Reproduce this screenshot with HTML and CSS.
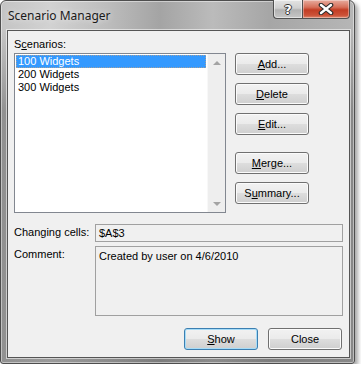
FILE: index.html
```html
<!DOCTYPE html>
<html lang="en">
<head>
    <meta charset="UTF-8">
    <title>Scenario Manager</title>
    <link rel="stylesheet" href="styles.css">
</head>
<body>
    <div class="window">
        <div class="titlebar">
            <span class="title">Scenario Manager</span>
            <div class="caption-buttons">
                <span class="cap-btn help">?</span>
                <span class="cap-btn close">
                    <svg width="16" height="12" viewBox="0 0 16 12">
                        <path d="M3 2 L13 10 M13 2 L3 10" stroke="#2c2c2c" stroke-width="4.6" stroke-linecap="round"/>
                        <path d="M3 2 L13 10 M13 2 L3 10" stroke="#ffffff" stroke-width="2.4" stroke-linecap="round"/>
                    </svg>
                </span>
            </div>
        </div>
        <div class="client">
            <div class="top">
                <div class="scenarios">
                    <div class="label">S<u>c</u>enarios:</div>
                    <div class="listbox">
                        <ul class="items">
                            <li class="selected">100 Widgets</li>
                            <li>200 Widgets</li>
                            <li>300 Widgets</li>
                        </ul>
                        <div class="scrollbar">
                            <span class="arrow up"></span>
                            <span class="arrow down"></span>
                        </div>
                    </div>
                </div>
                <div class="side-buttons">
                    <button class="btn"><u>A</u>dd...</button>
                    <button class="btn"><u>D</u>elete</button>
                    <button class="btn"><u>E</u>dit...</button>
                    <button class="btn spaced"><u>M</u>erge...</button>
                    <button class="btn">S<u>u</u>mmary...</button>
                </div>
            </div>
            <div class="field-row">
                <div class="field-label">Changing cells:</div>
                <div class="field cells">$A$3</div>
            </div>
            <div class="field-row comment-row">
                <div class="field-label">Comment:</div>
                <div class="field comment">Created by user on 4/6/2010</div>
            </div>
            <div class="footer">
                <button class="btn default"><u>S</u>how</button>
                <button class="btn">Close</button>
            </div>
        </div>
    </div>
</body>
</html>
```

FILE: styles.css
```css
body {
    margin: 0;
    background: #ffffff;
    font-family: "Liberation Sans", Arial, sans-serif;
    font-size: 11px;
    color: #000;
}
.window {
    width: 355px;
    height: 364px;
    box-sizing: border-box;
    border: 1px solid #4e4e4e;
    border-radius: 6px 6px 3px 3px;
    padding: 0 4px 5px 6px;
    background:
        linear-gradient(to bottom, rgba(0,0,0,0) 0, rgba(0,0,0,0) 30px, rgba(50,50,50,0.35) 110px, rgba(50,50,50,0.35) 100%),
        linear-gradient(to right, #c4c4c4 0%, #d2d2d2 14%, #bdbdbd 30%, #a4a4a4 45%, #bbbbbb 60%, #a6a6a6 76%, #b6b6b6 100%);
    box-shadow: inset 0 0 0 1px rgba(255,255,255,0.45), 3px 3px 4px rgba(0,0,0,0.35);
}
.titlebar {
    height: 29px;
    display: flex;
    justify-content: space-between;
}
.title {
    font-family: "Noto Sans", "Open Sans", sans-serif;
    font-size: 12px;
    color: #1a1a1a;
    padding-left: 1px;
    line-height: 29px;
    text-shadow: 0 0 6px rgba(255,255,255,0.8);
}
.caption-buttons {
    display: flex;
    height: 19px;
    margin-top: -1px;
}
.cap-btn {
    display: flex;
    align-items: center;
    justify-content: center;
    box-sizing: border-box;
    height: 19px;
    border: 1px solid #505050;
    border-top: none;
}
.help {
    width: 29px;
    border-right: none;
    border-radius: 0 0 0 4px;
    background: linear-gradient(to bottom, #e4e4e4 0%, #d0d0d0 45%, #b2b2b2 55%, #c6c6c6 100%);
    box-shadow: inset 0 0 0 1px rgba(255,255,255,0.5);
    color: #ffffff;
    font-family: "DejaVu Sans", sans-serif;
    font-weight: bold;
    font-size: 13px;
    text-shadow: 1px 0 0 #333, -1px 0 0 #333, 0 1px 0 #333, 0 -1px 0 #333;
}
.close {
    width: 48px;
    border-radius: 0 0 4px 0;
    background: linear-gradient(to bottom, #e7ad9f 0%, #d6705a 40%, #c23d24 55%, #cc5238 85%, #dd8a70 100%);
    box-shadow: inset 0 0 0 1px rgba(255,255,255,0.35);
}
.client {
    box-sizing: border-box;
    height: 328px;
    border: 1px solid #555555;
    background: #f0f0f0;
    padding: 7px 6px 7px 6px;
    box-shadow: 0 0 0 1px rgba(255,255,255,0.55);
}
.top {
    display: flex;
    gap: 9px;
}
.scenarios {
    width: 212px;
}
.label {
    line-height: 13px;
    margin-bottom: 2px;
}
.listbox {
    display: flex;
    height: 160px;
    box-sizing: border-box;
    border: 1px solid #828790;
    background: #ffffff;
}
.items {
    list-style: none;
    margin: 0;
    padding: 1px 1px 0 1px;
    flex: 1;
}
.items li {
    line-height: 13px;
    padding-left: 2px;
}
.items li.selected {
    background: #3399ff;
    color: #ffffff;
    outline: 1px dotted #a0a0a0;
    outline-offset: -1px;
}
.scrollbar {
    width: 17px;
    background: #eeeeee;
    border-left: 1px solid #f8f8f8;
    display: flex;
    flex-direction: column;
    justify-content: space-between;
    align-items: center;
    padding: 7px 0 6px;
}
.arrow {
    width: 0;
    height: 0;
    border-left: 4px solid transparent;
    border-right: 4px solid transparent;
}
.arrow.up {
    border-bottom: 4px solid #a3a3a3;
}
.arrow.down {
    border-top: 4px solid #a3a3a3;
}
.side-buttons {
    display: flex;
    flex-direction: column;
    gap: 8px;
    margin-top: 15px;
}
.btn {
    width: 74px;
    height: 22px;
    padding: 0;
    font-family: "Liberation Sans", Arial, sans-serif;
    font-size: 11px;
    color: #000;
    border: 1px solid #707070;
    border-radius: 3px;
    background: linear-gradient(to bottom, #f2f2f2 0%, #ebebeb 48%, #dddddd 52%, #cfcfcf 100%);
    box-shadow: inset 0 0 0 1px #fbfbfb;
}
.btn.spaced {
    margin-top: 9px;
}
.btn.default {
    border-color: #3c7fb1;
    box-shadow: inset 0 0 0 1px #a6dcf8;
}
.field-row {
    display: flex;
    margin-top: 11px;
}
.field-label {
    width: 81px;
}
.field {
    width: 248px;
    box-sizing: border-box;
    border: 1px solid #a0a0a0;
    padding-left: 3px;
    background: #f0f0f0;
}
.cells {
    height: 18px;
    line-height: 16px;
}
.field-row .field-label {
    line-height: 16px;
}
.comment-row {
    margin-top: 4px;
}
.comment {
    height: 70px;
    padding-top: 3px;
    line-height: 13px;
}
.footer {
    display: flex;
    justify-content: flex-end;
    gap: 10px;
    margin-top: 12px;
    margin-right: 1px;
}
```
